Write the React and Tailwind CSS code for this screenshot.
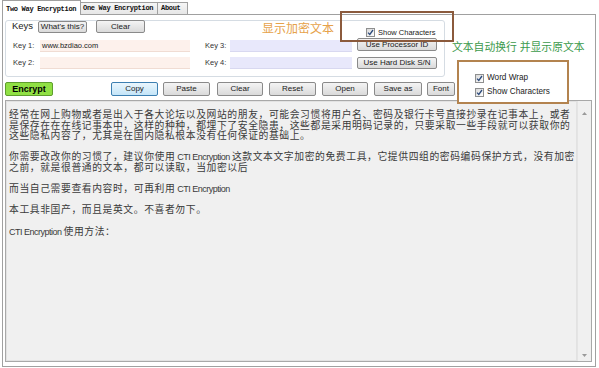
import React from 'react';

const cjk = "font-['Liberation_Sans','Noto_Sans_CJK_SC',sans-serif]";

const Check = ({ label, size = 'text-[7.5px]' }) => (
  <div className="flex items-center">
    <span className="w-[9px] h-[9px] border border-[#8e8f8f] bg-linear-to-br from-[#d8d8d8] to-white flex items-center justify-center">
      <svg width="7" height="7" viewBox="0 0 7 7">
        <path d="M1 3.6 L2.8 5.4 L6 1" fill="none" stroke="#2d4b7c" strokeWidth="1.3" />
      </svg>
    </span>
    <span className={`ml-[3px] ${size} text-[#1a1a1a] leading-none`}>{label}</span>
  </div>
);

const Btn = ({ children, className = '', focus = false }) => (
  <div
    className={`flex items-center justify-center rounded-[2px] border text-[8px] text-[#1a1a1a] leading-none ${
      focus
        ? 'border-[#3c7fb1] bg-linear-to-b from-[#eaf6fd] to-[#c4e5f8]'
        : 'border-[#8a8a8a] bg-linear-to-b from-[#f4f4f4] to-[#dadada]'
    } ${className}`}
  >
    {children}
  </div>
);

const Latin = ({ children }) => <span className="text-[9px] tracking-[-0.5px]">{children}</span>;

export default function App() {
  return (
    <div className={`relative w-[599px] h-[368px] bg-white overflow-hidden ${cjk}`}>
      {/* tabs */}
      <div className="flex items-end h-[14px] pl-[2px] font-['Liberation_Mono',monospace] font-bold text-[7px] tracking-[-0.3px] text-[#111]">
        <div className="relative z-10 -mb-px h-[15px] w-[79px] bg-white border-l border-t border-r border-[#a0a0a0] flex items-start pt-[3px] pl-[3px]">
          Two Way Encryption
        </div>
        <div className="h-[12px] w-[77px] bg-linear-to-b from-[#f6f6f6] to-[#e6e6e6] border-t border-r border-[#a0a0a0] flex items-center pl-[2px]">
          One Way Encryption
        </div>
        <div className="h-[12px] w-[30px] bg-linear-to-b from-[#f6f6f6] to-[#e6e6e6] border-t border-r border-[#a0a0a0] flex items-center pl-[3px]">
          About
        </div>
      </div>

      {/* tab page */}
      <div className="ml-[2px] w-[594px] h-[353px] border border-[#a0a0a0] bg-white">
        {/* Keys group */}
        <div className="mt-[5px] ml-[2px] w-[440px] h-[57px] border border-[#d5dce3] rounded-[3px]">
          <div className="flex items-start h-[12px]">
            <span className="ml-[6px] w-[26px] text-[9.5px] leading-[10px] text-[#222]">Keys</span>
            <Btn className="w-[49px] h-[12px] text-[7.5px]">What's this?</Btn>
            <Btn className="ml-[9px] -mt-px w-[49px] h-[13px] text-[7.5px]">Clear</Btn>
            <div className="ml-[221px] mt-[7px]">
              <Check label="Show Characters" />
            </div>
          </div>

          <div className="mt-[7px] flex items-start h-[12px]">
            <span className="ml-[7px] w-[27px] text-[7.5px] leading-[12px] text-[#333]">Key 1:</span>
            <div className="w-[150px] h-[12px] bg-[#fdf1ec] border-b border-[#f0dcd3] text-[7.5px] leading-[12px] pl-[2px] text-[#222]">
              www.bzdiao.com
            </div>
            <span className="ml-[15px] w-[25px] text-[7.5px] leading-[12px] text-[#333]">Key 3:</span>
            <div className="w-[122px] h-[12px] bg-[#e8e8fb] border-b border-[#d8d8f0]" />
            <Btn className="ml-[5px] -mt-[2px] w-[80px] h-[13px] text-[7px]">Use Processor ID</Btn>
          </div>

          <div className="mt-[5px] flex items-start h-[12px]">
            <span className="ml-[7px] w-[27px] text-[7.5px] leading-[12px] text-[#333]">Key 2:</span>
            <div className="w-[150px] h-[12px] bg-[#fdf1ec] border-b border-[#f0dcd3]" />
            <span className="ml-[15px] w-[25px] text-[7.5px] leading-[12px] text-[#333]">Key 4:</span>
            <div className="w-[122px] h-[12px] bg-[#e8e8fb] border-b border-[#d8d8f0]" />
            <Btn className="ml-[5px] w-[80px] h-[12px] text-[7px]">Use Hard Disk S/N</Btn>
          </div>
        </div>

        {/* action row */}
        <div className="mt-[5px] ml-[2px] flex h-[14px]">
          <div className="w-[48px] h-[14px] rounded-[2px] border border-[#5f9e2e] bg-[#90e044] flex items-center justify-center text-[9px] font-bold leading-none text-black">
            Encrypt
          </div>
          <Btn focus className="ml-[58px] w-[47px] h-[14px]">Copy</Btn>
          <Btn className="ml-[5px] w-[47px] h-[14px]">Paste</Btn>
          <Btn className="ml-[7px] w-[46px] h-[14px]">Clear</Btn>
          <Btn className="ml-[6px] w-[47px] h-[14px]">Reset</Btn>
          <Btn className="ml-[6px] w-[46px] h-[14px]">Open</Btn>
          <Btn className="ml-[6px] w-[48px] h-[14px]">Save as</Btn>
          <Btn className="ml-[5px] w-[28px] h-[14px]">Font</Btn>
        </div>

        {/* text area */}
        <div className="mt-[4px] ml-[2px] w-[587px] h-[262px] border border-[#a8a8a8] flex">
          <div className="flex-1 border border-[#e2e2e2] bg-[#f0f0f0] pl-[2px] pt-[8px] text-[9.8px] tracking-[0.6px] leading-[10.6px] text-[#3a3a3a] whitespace-nowrap">
            <div>经常在网上购物或者是出入于各大论坛以及网站的朋友，可能会习惯将用户名、密码及银行卡号直接抄录在记事本上，或者</div>
            <div>是保存在在在线记事本中，这样的种种，都埋下了安全隐患，这些都是采用明码记录的，只要采取一些手段就可以获取你的</div>
            <div>这些隐私内容了，尤其是在国内隐私根本没有任何保证的基础上。</div>
            <div className="h-[10.6px]" />
            <div>你需要改改你的习惯了，建议你使用<Latin> CTI Encryption </Latin>这款文本文字加密的免费工具，它提供四组的密码编码保护方式，没有加密</div>
            <div>之前，就是很普通的文本，都可以读取，当加密以后</div>
            <div className="h-[10.6px]" />
            <div>而当自己需要查看内容时，可再利用<Latin> CTI Encryption</Latin></div>
            <div className="h-[10.6px]" />
            <div>本工具非国产，而且是英文。不喜者勿下。</div>
            <div className="h-[10.6px]" />
            <div><Latin>CTI Encryption </Latin>使用方法：</div>
          </div>
          <div className="w-[14px] bg-[#f0f0f0] border-l border-[#e4e4e4] flex flex-col justify-between items-center pt-[11px] pb-[4px]">
            <svg width="5" height="3" viewBox="0 0 5 3"><path d="M0 3 L2.5 0 L5 3 Z" fill="#9a9a9a" /></svg>
            <svg width="5" height="3" viewBox="0 0 5 3"><path d="M0 0 L2.5 3 L5 0 Z" fill="#9a9a9a" /></svg>
          </div>
        </div>
      </div>

      {/* annotations */}
      <div className="absolute left-[262px] top-[22px] text-[12px] leading-[14px] text-[#e6a24a]">显示加密文本</div>
      <div className="absolute left-[340px] top-[11px] w-[114px] h-[31px] border-2 border-[#8b5a3c]" />
      <div className="absolute left-[452px] top-[41px] text-[10.8px] leading-[13px] text-[#3b9a4b]">文本自动换行 并显示原文本</div>
      <div className="absolute left-[457px] top-[60px] w-[112px] h-[44px] border-2 border-[#b3834f] bg-white pl-[16px] pt-[12px] flex flex-col gap-[5px]">
        <Check label="Word Wrap" size="text-[8.2px]" />
        <Check label="Show Characters" size="text-[8.2px]" />
      </div>
    </div>
  );
}
